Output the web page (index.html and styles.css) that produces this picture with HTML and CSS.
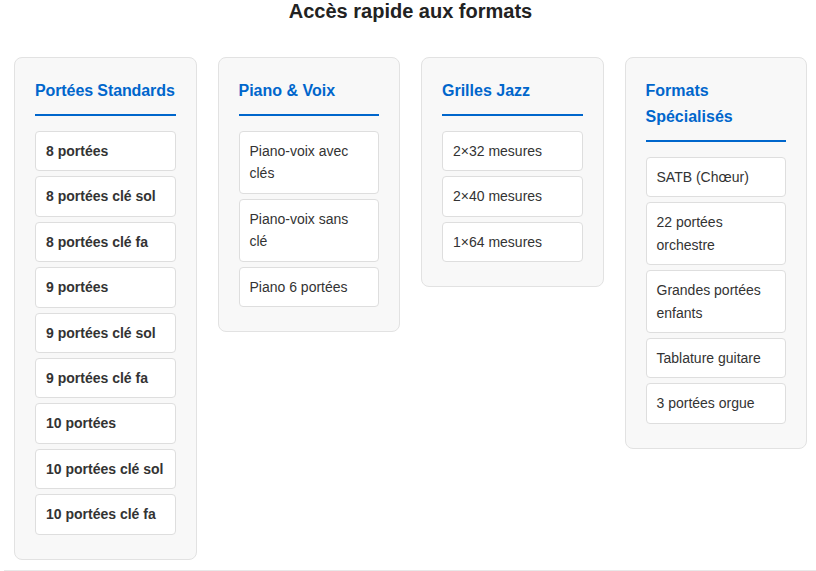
FILE: index.html
```html
<!DOCTYPE html>
<html lang="fr">
<head>
    <meta charset="UTF-8">
    <meta name="viewport" content="width=device-width, initial-scale=1.0">
    <title>Accès rapide aux formats</title>
    <link rel="stylesheet" href="styles.css">
</head>
<body>
    <div class="quick-access">
        <h2>Accès rapide aux formats</h2>

        <div class="format-grid">
            <div class="format-group">
                <h3 class="single-line">Portées Standards</h3>
                <a class="format-link bold">8 portées</a>
                <a class="format-link bold">8 portées clé sol</a>
                <a class="format-link bold">8 portées clé fa</a>
                <a class="format-link bold">9 portées</a>
                <a class="format-link bold">9 portées clé sol</a>
                <a class="format-link bold">9 portées clé fa</a>
                <a class="format-link bold">10 portées</a>
                <a class="format-link bold">10 portées clé sol</a>
                <a class="format-link bold">10 portées clé fa</a>
            </div>

            <div class="format-group">
                <h3>Piano &amp; Voix</h3>
                <a class="format-link">Piano-voix avec clés</a>
                <a class="format-link">Piano-voix sans clé</a>
                <a class="format-link">Piano 6 portées</a>
            </div>

            <div class="format-group">
                <h3>Grilles Jazz</h3>
                <a class="format-link">2×32 mesures</a>
                <a class="format-link">2×40 mesures</a>
                <a class="format-link">1×64 mesures</a>
            </div>

            <div class="format-group">
                <h3>Formats Spécialisés</h3>
                <a class="format-link">SATB (Chœur)</a>
                <a class="format-link">22 portées orchestre</a>
                <a class="format-link">Grandes portées enfants</a>
                <a class="format-link">Tablature guitare</a>
                <a class="format-link">3 portées orgue</a>
            </div>
        </div>
    </div>
    <div class="separator"></div>
</body>
</html>
```

FILE: styles.css
```css
body {
    font-family: 'Liberation Sans', Arial, sans-serif;
    line-height: 1.6;
    margin: 0;
    color: #333;
    background-color: #fff;
}
.quick-access {
    width: 793px;
    margin-left: 14px;
}
h2 {
    font-size: 20px;
    line-height: 23px;
    color: #222;
    text-align: center;
    margin: 0 0 34px 0;
}
.format-grid {
    display: grid;
    grid-template-columns: repeat(4, 1fr);
    gap: 21px;
    align-items: start;
}
.format-group {
    background-color: #f8f8f8;
    border: 1px solid #e2e2e2;
    border-radius: 8px;
    padding: 20px 20px 19px;
}
.format-group h3 {
    font-size: 16px;
    line-height: 26px;
    color: #0066cc;
    margin: 0 0 15px 0;
    padding-bottom: 10px;
    border-bottom: 2px solid #0066cc;
}
.format-group h3.single-line {
    white-space: nowrap;
    letter-spacing: -0.1px;
}
.format-link {
    display: block;
    background-color: #fff;
    border: 1px solid #dedede;
    border-radius: 4px;
    padding: 8px 10px;
    margin-bottom: 5px;
    font-size: 14px;
    line-height: 22.4px;
    color: #333;
    text-decoration: none;
}
.format-link.bold {
    font-weight: bold;
}
.separator {
    margin: 10px 0 0 4px;
    border-top: 1px solid #e8e8e8;
}
```
